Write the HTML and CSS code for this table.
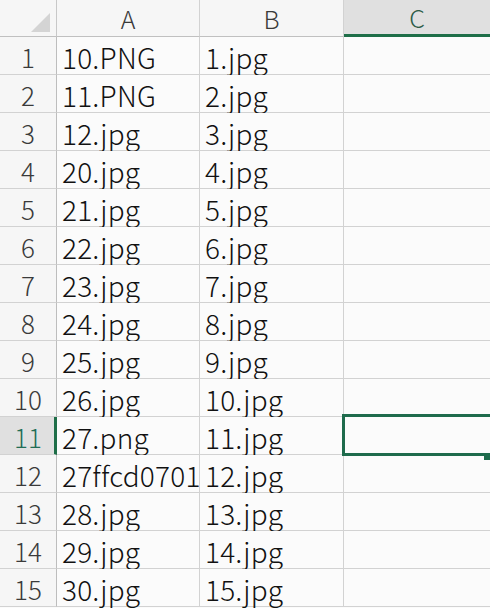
FILE: index.html
```html
<!DOCTYPE html>
<html>
<head>
<meta charset="utf-8">
<link rel="stylesheet" href="styles.css">
</head>
<body>
<div class="sheet">
  <div class="corner"><span class="tri"></span></div>
  <div class="colhead">A</div>
  <div class="colhead">B</div>
  <div class="colhead active">C</div>

  <div class="rowhead">1</div><div class="cell">10.PNG</div><div class="cell">1.jpg</div><div class="cell"></div>
  <div class="rowhead">2</div><div class="cell">11.PNG</div><div class="cell">2.jpg</div><div class="cell"></div>
  <div class="rowhead">3</div><div class="cell">12.jpg</div><div class="cell">3.jpg</div><div class="cell"></div>
  <div class="rowhead">4</div><div class="cell">20.jpg</div><div class="cell">4.jpg</div><div class="cell"></div>
  <div class="rowhead">5</div><div class="cell">21.jpg</div><div class="cell">5.jpg</div><div class="cell"></div>
  <div class="rowhead">6</div><div class="cell">22.jpg</div><div class="cell">6.jpg</div><div class="cell"></div>
  <div class="rowhead">7</div><div class="cell">23.jpg</div><div class="cell">7.jpg</div><div class="cell"></div>
  <div class="rowhead">8</div><div class="cell">24.jpg</div><div class="cell">8.jpg</div><div class="cell"></div>
  <div class="rowhead">9</div><div class="cell">25.jpg</div><div class="cell">9.jpg</div><div class="cell"></div>
  <div class="rowhead">10</div><div class="cell">26.jpg</div><div class="cell">10.jpg</div><div class="cell"></div>
  <div class="rowhead active">11</div><div class="cell">27.png</div><div class="cell">11.jpg</div><div class="cell selected"><span class="selbox"></span><span class="handle"></span></div>
  <div class="rowhead">12</div><div class="cell clip">27ffcd0701</div><div class="cell">12.jpg</div><div class="cell"></div>
  <div class="rowhead">13</div><div class="cell">28.jpg</div><div class="cell">13.jpg</div><div class="cell"></div>
  <div class="rowhead">14</div><div class="cell">29.jpg</div><div class="cell">14.jpg</div><div class="cell"></div>
  <div class="rowhead">15</div><div class="cell">30.jpg</div><div class="cell">15.jpg</div><div class="cell"></div>
</div>
</body>
</html>
```
FILE: styles.css
```css
html, body {
  margin: 0;
  padding: 0;
  background: #fbfbfb;
}
body {
  width: 490px;
  height: 608px;
  overflow: hidden;
  font-family: "Noto Sans CJK SC", "Noto Sans", sans-serif;
}
.sheet {
  display: grid;
  grid-template-columns: 57px 143px 144px 146px;
  grid-template-rows: 37px repeat(15, 38px);
  width: 490px;
}
.corner, .colhead, .rowhead, .cell {
  box-sizing: border-box;
  border-right: 1px solid #d2d2d2;
  border-bottom: 1px solid #d2d2d2;
  white-space: nowrap;
}
.corner {
  background: #f6f6f6;
  position: relative;
  border-right-color: #c8c8c8;
  border-bottom-color: #c0c0c0;
}
.tri {
  position: absolute;
  right: 6px;
  bottom: 4px;
  width: 0;
  height: 0;
  border-left: 19px solid transparent;
  border-bottom: 19px solid #d4d4d4;
}
.colhead {
  background: #f6f6f6;
  color: #3a3a3a;
  font-size: 25px;
  font-weight: 300;
  text-align: center;
  line-height: 36px;
  border-bottom-color: #c0c0c0;
}
.colhead.active {
  background: #e0e0e0;
  color: #2d5c46;
  border-bottom: 3px solid #1e6e48;
  line-height: 34px;
  border-right: none;
}
.rowhead {
  background: #f6f6f6;
  color: #3a3a3a;
  font-size: 26px;
  font-weight: 300;
  text-align: center;
  line-height: 40px;
  border-right-color: #bdbdbd;
}
.rowhead.active {
  background: #e0e0e0;
  color: #236d55;
  border-right: 3px solid #1e6e48;
  padding-left: 2px;
}
.cell {
  background: #fbfbfb;
  color: #111;
  font-size: 28px;
  line-height: 40px;
  padding-left: 5px;
  font-weight: 300;
  letter-spacing: 0.2px;
}
.cell.clip {
  overflow-x: clip;
}
.cell:nth-child(4n) {
  border-right: none;
}
.cell.selected {
  position: relative;
}
.selbox {
  position: absolute;
  left: -2px;
  top: -3px;
  right: -6px;
  bottom: -2px;
  border: 3px solid #1e6b4c;
}
.handle {
  position: absolute;
  right: 0;
  bottom: -6px;
  width: 6px;
  height: 6px;
  background: #1e6b4c;
}
```
